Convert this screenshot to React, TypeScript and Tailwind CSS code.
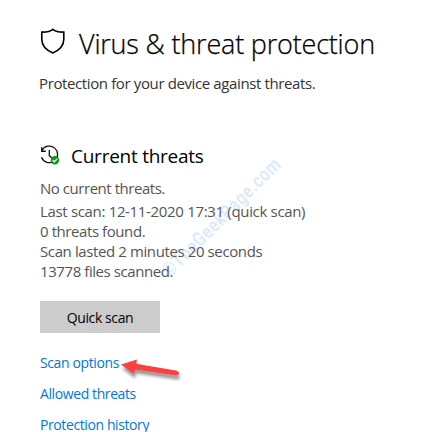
const scanDetails = [
  { text: "No current threats.", className: "mb-[3px] tracking-[-0.46px]" },
  { text: "Last scan: 12-11-2020 17:31 (quick scan)", className: "tracking-[-0.33px]" },
  { text: "0 threats found.", className: "tracking-[-0.42px]" },
  { text: "Scan lasted 2 minutes 20 seconds", className: "tracking-[-0.39px]" },
  { text: "13778 files scanned.", className: "tracking-[-0.42px]" },
];

const links = [
  { label: "Scan options", className: "tracking-[-0.38px]" },
  { label: "Allowed threats", className: "tracking-[-0.4px]" },
  { label: "Protection history", className: "tracking-[-0.4px]" },
];

function ShieldIcon() {
  return (
    <svg width="26" height="27" viewBox="0 0 26 27" fill="none" className="-mt-1.5 shrink-0">
      <path
        d="M12.8 1.3C10.4 3.3 6.4 4.2 1.8 4.1V11.2C1.8 17.6 5.6 21.8 12.8 24.9C20 21.8 23.8 17.6 23.8 11.2V4.1C19.2 4.2 15.2 3.3 12.8 1.3Z"
        stroke="#000"
        strokeWidth="1.6"
      />
    </svg>
  );
}

function HistoryIcon() {
  return (
    <svg width="20" height="20" viewBox="0 0 20 20" fill="none" className="-mt-0.5 shrink-0">
      <path d="M1.9 5.6A8.3 8.3 0 1 1 1.5 12.2" stroke="#111" strokeWidth="1.3" />
      <path d="M1.7 2.2V6.3H5.8" stroke="#111" strokeWidth="1.4" />
      <path d="M9.3 5V10.6L12 12.9" stroke="#111" strokeWidth="1.3" />
      <circle cx="14.9" cy="15.2" r="4.2" fill="#109618" />
      <path d="M12.7 15.2L14.3 16.8L17.2 13.9" stroke="#fff" strokeWidth="1.3" />
    </svg>
  );
}

function Arrow() {
  return (
    <svg
      width="64"
      height="32"
      viewBox="0 0 64 32"
      className="absolute top-[2px] left-[79px] overflow-visible"
    >
      <defs>
        <filter id="arrow-shadow" x="-20%" y="-30%" width="150%" height="190%">
          <feDropShadow dx="1" dy="4" stdDeviation="1.8" floodColor="#000" floodOpacity="0.4" />
        </filter>
      </defs>
      <path
        d="M2 9.6L18 4.4L17.3 8.7L58 15.8Q60.4 16.8 60 18.8Q59.4 20.8 57 20.4L16 14.4L15 19.2Z"
        fill="#f9423f"
        filter="url(#arrow-shadow)"
      />
    </svg>
  );
}

export default function App() {
  return (
    <main className="relative h-[432px] w-[440px] overflow-hidden bg-white pl-10 font-['Open_Sans',sans-serif] whitespace-nowrap">
      <header className="mt-6 flex h-10 items-center gap-[13px]">
        <ShieldIcon />
        <h1 className="text-[27px] leading-10 font-light tracking-[-0.19px] text-black [-webkit-text-stroke:0.25px_black]">
          Virus &amp; threat protection
        </h1>
      </header>
      <p className="mt-2 -ml-px text-[15px] leading-[22px] tracking-[-0.38px] text-[#333]">
        Protection for your device against threats.
      </p>

      <section className="mt-12">
        <div className="flex h-7 items-center gap-[11px]">
          <HistoryIcon />
          <h2 className="text-[19px] leading-7 tracking-[-0.25px] text-black">Current threats</h2>
        </div>
        <div className="mt-2 text-[15px] leading-5 text-[#555]">
          {scanDetails.map((line) => (
            <p key={line.text} className={line.className}>
              {line.text}
            </p>
          ))}
        </div>
        <button className="mt-5 flex h-8 w-[120px] items-center justify-center bg-[#ccc] text-[14px] tracking-[-0.4px] text-black">
          Quick scan
        </button>
        <nav className="mt-5 flex flex-col items-start gap-[11px] text-[14px] leading-5 text-[#0078d4]">
          {links.map((link, i) => (
            <a key={link.label} href="#" className={`relative ${link.className}`}>
              {link.label}
              {i === 0 && <Arrow />}
            </a>
          ))}
        </nav>
      </section>

      <div className="pointer-events-none absolute top-[207px] left-[121px] w-[200px] [transform:rotate(-45deg)_scaleX(0.79)] text-center font-['Roboto',sans-serif] text-[20px] leading-5 font-bold tracking-[0.9px] text-[#4a90d9]/20">
        ©TheGeekPage.com
      </div>
    </main>
  );
}
